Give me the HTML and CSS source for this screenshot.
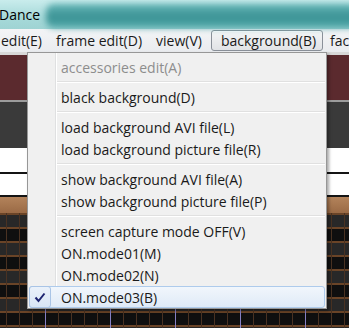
FILE: index.html
```html
<!DOCTYPE html>
<html lang="en">
<head>
<meta charset="UTF-8">
<title>Dance</title>
<link rel="stylesheet" href="styles.css">
</head>
<body>
<div class="screen">
    <div class="titlebar">
        <span class="title">Dance</span>
        <div class="title-blur"></div>
    </div>
    <div class="menubar">
        <span class="mb-item">edit(E)</span>
        <span class="mb-item">frame edit(D)</span>
        <span class="mb-item">view(V)</span>
        <span class="mb-item open">background(B)</span>
        <span class="mb-item">face(F)</span>
    </div>
    <div class="canvas">
        <div class="strip"></div>
        <div class="band-red"></div>
        <div class="band-gray"></div>
        <div class="band-white"></div>
        <div class="band-brown"></div>
        <div class="grid"></div>
    </div>

    <div class="dropdown">
        <div class="item disabled"><span class="icon"></span><span class="label">accessories edit(A)</span></div>
        <div class="sep"></div>
        <div class="item"><span class="icon"></span><span class="label">black background(D)</span></div>
        <div class="sep"></div>
        <div class="item"><span class="icon"></span><span class="label">load background AVI file(L)</span></div>
        <div class="item"><span class="icon"></span><span class="label">load background picture file(R)</span></div>
        <div class="sep"></div>
        <div class="item"><span class="icon"></span><span class="label">show background AVI file(A)</span></div>
        <div class="item"><span class="icon"></span><span class="label">show background picture file(P)</span></div>
        <div class="sep"></div>
        <div class="item"><span class="icon"></span><span class="label">screen capture mode OFF(V)</span></div>
        <div class="item"><span class="icon"></span><span class="label">ON.mode01(M)</span></div>
        <div class="item"><span class="icon"></span><span class="label">ON.mode02(N)</span></div>
        <div class="item checked">
            <span class="icon">
                <svg width="12" height="11" viewBox="0 0 12 11"><path d="M1.5 5.5 L4.5 9 L10.5 1.5" fill="none" stroke="#1d2470" stroke-width="2"/></svg>
            </span>
            <span class="label">ON.mode03(B)</span>
        </div>
    </div>
</div>
</body>
</html>
```

FILE: styles.css
```css
body {
    margin: 0;
    font-family: "Open Sans", "Noto Sans", sans-serif;
    font-size: 14px;
    color: #1a1a1a;
}
.screen {
    position: relative;
    width: 349px;
    height: 328px;
    overflow: hidden;
}

/* title bar */
.titlebar {
    height: 29px;
    display: flex;
    align-items: center;
    background: linear-gradient(to bottom, #c9ecec, #a6d9d9 60%, #9fd3d3);
}
.title {
    margin-left: -1px;
    font-size: 14px;
    color: #000;
}
.title-blur {
    flex: 1;
    height: 24px;
    margin: 2px -10px 0 6px;
    border-radius: 8px;
    background: linear-gradient(to bottom, #64b6b7, #3a9193 55%, #56acad);
    filter: blur(3px);
}

/* menu bar */
.menubar {
    height: 23px;
    display: flex;
    align-items: center;
    margin-left: -6px;
    background: linear-gradient(to bottom, #f3f4f6, #eaecef);
    white-space: nowrap;
}
.mb-item {
    padding: 0 6px;
    line-height: 19px;
    border: 1px solid transparent;
}
.mb-item.open {
    margin-left: 2px;
    padding: 0 6px 0 9px;
    border-color: #8a9099;
    border-radius: 3px;
    background: linear-gradient(to bottom, #f4f5f6, #e1e3e6);
    box-shadow: inset 0 1px 0 #fff;
}

/* application content behind the menu */
.strip {
    height: 3px;
    background: #d8d8d8;
}
.band-red {
    height: 45px;
    background: #5b2a2e;
    border-bottom: 2px solid #9c9c9c;
}
.band-gray {
    height: 46px;
    background: #3a3a3a;
}
.band-white {
    height: 47px;
    background: #fff;
    border-bottom: 2px solid #141414;
    background-image: linear-gradient(to bottom, transparent 24px, #141414 24px, #141414 26px, transparent 26px);
}
.band-brown {
    height: 16px;
    background: linear-gradient(to bottom, #b3835b, #9a6a45);
}
.grid {
    height: 115px;
    background-color: #121212;
    background-image:
        linear-gradient(to right, #8780c4 1px, transparent 1px),
        linear-gradient(to right, #4a3222 1px, transparent 1px),
        linear-gradient(to bottom, #6a4427 2px, transparent 2px),
        linear-gradient(to bottom, #282828 14px, #0f0f0f 14px);
    background-size: 65px 100%, 13px 100%, 100% 14px, 100% 28px;
    background-position: 45px 0, 6px 0, 0 0, 0 0;
}

/* dropdown */
.dropdown {
    position: absolute;
    left: 27px;
    top: 52px;
    width: 298px;
    padding: 3px 0 0;
    border: 1px solid #979797;
    background: linear-gradient(to right, #f0f0f0 27px, #dfe0e1 27px, #dfe0e1 28px, #fff 28px, #fff 29px, #f0f0f0 29px);
    box-shadow: 2px 2px 3px rgba(0, 0, 0, 0.35);
    white-space: nowrap;
}
.item {
    height: 22px;
    margin: 0 1px;
    display: flex;
    align-items: center;
    box-sizing: border-box;
    border: 1px solid transparent;
    border-radius: 3px;
}
.icon {
    width: 25px;
    align-self: stretch;
    display: flex;
    align-items: center;
    justify-content: center;
}
.label {
    padding-left: 6px;
}
.item.disabled .label {
    color: #8d8d8d;
}
.item.checked {
    border-color: #aecbec;
    background: linear-gradient(to bottom, #f1f6fc, #dfeaf7);
}
.item.checked .icon {
    width: 20px;
    margin: -1px 4px -1px -1px;
    border: 1px solid #a9c4e6;
    border-radius: 3px;
    background: linear-gradient(to bottom, #eaf1fa, #d8e5f5);
}
.sep {
    height: 8px;
    margin-left: 29px;
    margin-right: 1px;
    background: linear-gradient(to bottom, transparent 3px, #e0e0e0 3px, #e0e0e0 4px, #fff 4px, #fff 5px, transparent 5px);
}
```
